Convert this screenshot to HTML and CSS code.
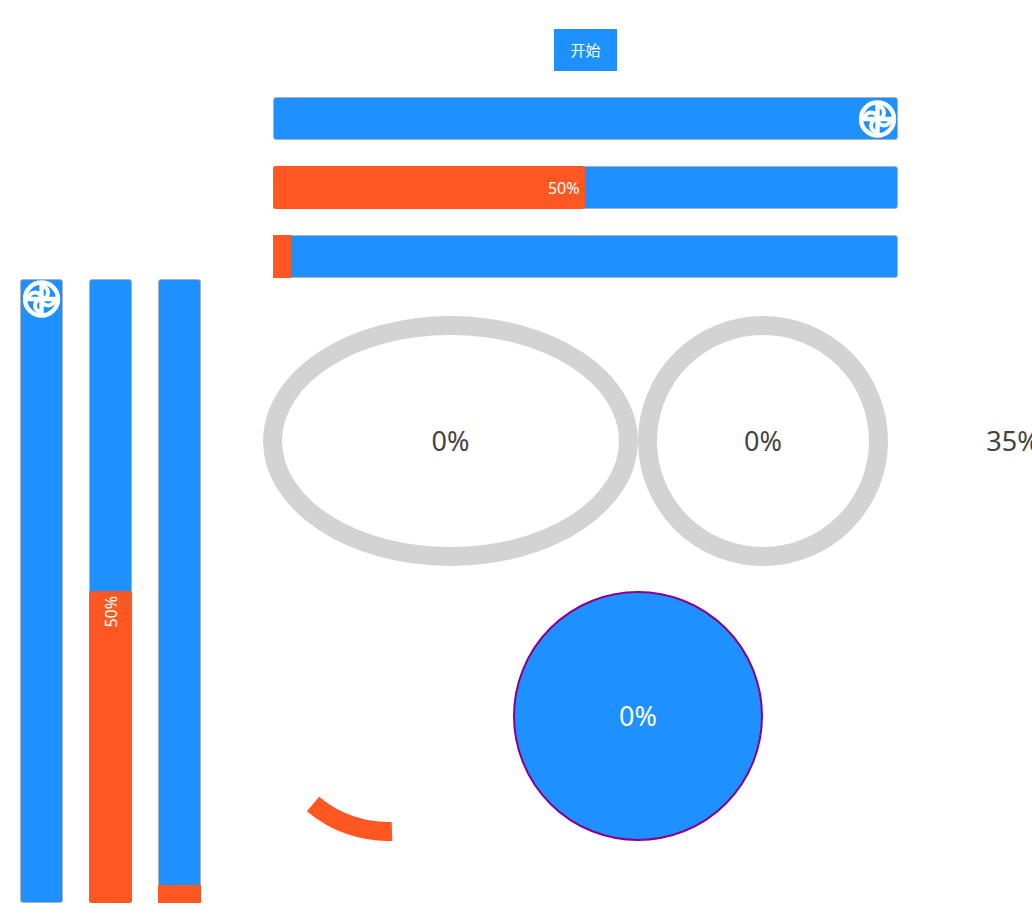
FILE: index.html
```html
<!DOCTYPE html>
<html lang="zh-CN">
<head>
<meta charset="utf-8">
<meta name="viewport" content="width=device-width, initial-scale=1">
<title>进度条</title>
<link rel="stylesheet" href="styles.css">
</head>
<body>
<svg class="defs" aria-hidden="true">
  <symbol id="fan" viewBox="0 0 38 38">
    <g fill="none" stroke="#fff" stroke-width="4.4">
      <circle cx="18.500" cy="19" r="16.500"/>
      <path d="M18.500 2V36M2 19H35"/>
      <path stroke-width="4" d="M18.500 6A6.500 6.500 0 0 1 18.500 19M31.500 19A6.500 6.500 0 0 1 18.500 19M18.500 32A6.500 6.500 0 0 1 18.500 19M5.500 19A6.500 6.500 0 0 1 18.500 19"/>
    </g>
  </symbol>
</svg>
<div class="page">
  <aside class="columns">
    <div class="column" role="progressbar" aria-label="竖向图标" aria-valuenow="0"><svg class="fan"><use href="#fan"/></svg></div>
    <div class="column" role="progressbar" aria-label="竖向进度" aria-valuenow="50"><div class="rise half"><span class="upright">50%</span></div></div>
    <div class="column" role="progressbar" aria-label="竖向起点" aria-valuenow="3"><div class="rise start"></div></div>
  </aside>
  <main class="content">
    <div class="bars">
      <button class="begin" type="button">开始</button>
      <div class="bar" role="progressbar" aria-label="横向图标" aria-valuenow="0"><svg class="fan end"><use href="#fan"/></svg></div>
      <div class="bar" role="progressbar" aria-label="横向进度" aria-valuenow="50"><div class="run half">50%</div></div>
      <div class="bar" role="progressbar" aria-label="横向起点" aria-valuenow="3"><div class="run start"></div></div>
    </div>
    <div class="gauges">
      <div class="gauge ring oval">0%</div>
      <div class="gauge ring">0%</div>
      <div class="gauge">35%</div>
    </div>
    <div class="gauges">
      <svg class="gauge" viewBox="0 0 250 250" aria-hidden="true"><path d="M50 213A115.500 115.500 0 0 0 129 240.400" fill="none" stroke="#ff5722" stroke-width="19"/></svg>
      <div class="gauge disc">0%</div>
    </div>
  </main>
</div>
</body>
</html>
```
FILE: styles.css
```css
* {
  box-sizing: border-box;
}

body {
  margin: 0;
  overflow: hidden;
  background: #fff;
  color: #444;
  font: 16px/24px "Noto Sans", "Noto Sans CJK SC", sans-serif;
}

.defs {
  position: absolute;
  width: 0;
  height: 0;
}

.page {
  display: flex;
  align-items: flex-start;
  gap: 62px;
  padding: 29px 0 0 20px;
}

.columns {
  display: flex;
  flex: none;
  gap: 26px;
  padding-top: 250px;
}

.column,
.bar {
  display: flex;
  border: 1px solid #aab4c0;
  border-radius: 3px;
  background: #1e90ff;
}

.column {
  flex-direction: column;
  width: 43px;
  height: 624px;
}

.fan {
  display: block;
  flex: none;
  align-self: center;
  width: 38px;
  height: 38px;
}

.end {
  margin-left: auto;
}

.rise,
.run {
  display: flex;
  background: #ff5722;
  color: #fff;
}

.rise {
  justify-content: center;
  margin: auto -1px -1px;
  padding-top: 5px;
}

.run {
  align-items: center;
  justify-content: flex-end;
  margin: -1px auto -1px -1px;
  padding-right: 5px;
}

.half {
  border-radius: 3px;
}

.rise.half {
  height: 312px;
}

.run.half {
  width: 50%;
}

.rise.start {
  height: 18px;
  padding: 0;
}

.run.start {
  width: 18px;
  padding: 0;
}

.upright {
  align-self: flex-start;
  writing-mode: vertical-rl;
  transform: rotate(180deg);
}

.content {
  flex: 1;
  min-width: 0;
}

.bars {
  display: flex;
  flex-direction: column;
  gap: 26px;
  max-width: 635px;
  margin-bottom: 38px;
  padding-left: 10px;
}

.bar {
  height: 43px;
}

.begin {
  align-self: center;
  padding: 9px 16px;
  border: 0;
  background: #1e90ff;
  color: #fff;
  font: 15px/24px "Noto Sans CJK SC", sans-serif;
}

.gauges {
  display: flex;
  margin-bottom: 25px;
}

.gauge {
  display: flex;
  flex: none;
  align-items: center;
  justify-content: center;
  width: 250px;
  height: 250px;
  font-size: 27px;
}

.ring {
  border: 19px solid #d3d3d3;
  border-radius: 50%;
}

.oval {
  width: 375px;
}

.disc {
  border: 2px solid #8b008b;
  border-radius: 50%;
  background: #1e90ff;
  color: #fff;
}
```
